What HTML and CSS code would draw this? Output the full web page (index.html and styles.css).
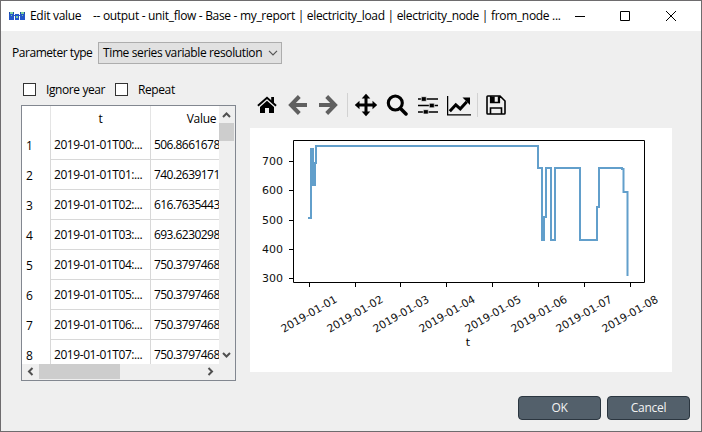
FILE: index.html
```html
<!DOCTYPE html>
<html lang="en">
<head>
<meta charset="utf-8">
<title>Edit value</title>
<link rel="stylesheet" href="styles.css">
</head>
<body>
<div class="window">
  <header class="titlebar">
    <svg class="app-icon" width="16" height="10" viewBox="0 0 16 10" shape-rendering="crispEdges">
      <path fill="#2456c8" d="M0 1h5v8H0zM6 3h4v6H6zM11 1h5v8h-5zM5 4h6v1H5z"/>
      <path fill="#1a49a8" d="M0 1h1v2H0zM4 1h1v2H4zM11 1h1v2h-1zM15 1h1v2h-1z"/>
      <path fill="#7fce9b" d="M1 1h3v2H1zM12 1h3v2h-3zM7 5h2v2H7zM2 4h1v1H2zM13 4h1v1h-1z"/>
    </svg>
    <span class="title-name">Edit value</span>
    <span class="title-path">-- output - unit_flow - Base - my_report | electricity_load | electricity_node | from_node ...</span>
    <svg class="controls" width="104" height="12" viewBox="0 0 104 12" fill="none" stroke="#000">
      <path d="M1 6.500h10M46.500 1.500h9v9h-9zM92 1l10 10M102 1l-10 10"/>
    </svg>
  </header>

  <div class="type-row">
    <span class="type-label">Parameter type</span>
    <div class="combo">
      <span>Time series variable resolution</span>
      <svg width="10" height="6" viewBox="0 0 10 6" fill="none" stroke="#555" stroke-width="1.200"><path d="M1 .8l4 4 4-4"/></svg>
    </div>
  </div>

  <main class="content">
    <section class="left">
      <div class="checks">
        <i class="box"></i><span class="ignore">Ignore year</span>
        <i class="box"></i><span class="repeat">Repeat</span>
      </div>
      <div class="table">
        <div class="grid">
          <div class="row head"><span class="num"></span><span class="time">t</span><span class="val">Value</span></div>
          <div class="row"><span class="num">1</span><span class="time">2019-01-01T00:...</span><span class="val">506.86616787</span></div>
          <div class="row"><span class="num">2</span><span class="time">2019-01-01T01:...</span><span class="val">740.26391718</span></div>
          <div class="row"><span class="num">3</span><span class="time">2019-01-01T02:...</span><span class="val">616.76354430</span></div>
          <div class="row"><span class="num">4</span><span class="time">2019-01-01T03:...</span><span class="val">693.62302980</span></div>
          <div class="row"><span class="num">5</span><span class="time">2019-01-01T04:...</span><span class="val">750.3797468...</span></div>
          <div class="row"><span class="num">6</span><span class="time">2019-01-01T05:...</span><span class="val">750.3797468...</span></div>
          <div class="row"><span class="num">7</span><span class="time">2019-01-01T06:...</span><span class="val">750.3797468...</span></div>
          <div class="row"><span class="num">8</span><span class="time">2019-01-01T07:...</span><span class="val">750.3797468...</span></div>
        </div>
        <div class="vscroll">
          <svg width="15" height="17" viewBox="0 0 15 17" class="arrow"><path d="M4 11l3.500-3.500L11 11"/></svg>
          <div class="vthumb"></div>
          <svg width="15" height="17" viewBox="0 0 15 17" class="arrow end"><path d="M4 6l3.500 3.500L11 6"/></svg>
        </div>
        <div class="hscroll">
          <svg width="17" height="15" viewBox="0 0 17 15" class="arrow"><path d="M10.500 4L7 7.500l3.500 3.500"/></svg>
          <div class="hthumb"></div>
          <svg width="17" height="15" viewBox="0 0 17 15" class="arrow right"><path d="M6.500 4l3.500 3.500L6.500 11"/></svg>
        </div>
      </div>
    </section>

    <section class="plot">
      <div class="toolbar">
        <svg class="home" width="20" height="18" viewBox="0 0 20 18">
          <path d="M3 11l7-6.300 7 6.300v6h-5v-5H8v5H3z"/>
          <path d="M.9 9.700L10 1.700l9.100 8" fill="none" stroke="#efefef" stroke-width="3.400"/>
          <path d="M.9 9.700L10 1.700l9.100 8" fill="none" stroke="#000" stroke-width="1.900"/>
          <path d="M14.200 1H17v6.500l-2.800-2.500z"/>
        </svg>
        <svg class="back" width="20" height="20" viewBox="0 0 20 20" fill="none" stroke="#606060" stroke-width="4"><path d="M19 10H4M11.300 1.500L3 10l8.300 8.500"/></svg>
        <svg class="forward" width="20" height="20" viewBox="0 0 20 20" fill="none" stroke="#606060" stroke-width="4"><path d="M1 10h15M8.700 1.500L17 10l-8.300 8.500"/></svg>
        <i class="sep"></i>
        <svg class="move" width="24" height="24" viewBox="0 0 24 24"><path d="M12 .8l4.300 4.700h-2.800v5h5V7.700l4.700 4.300-4.700 4.300v-2.800h-5v5h2.800L12 23.200l-4.300-4.700h2.800v-5h-5v2.800L.8 12l4.700-4.300v2.800h5v-5H7.700z"/></svg>
        <svg class="search" width="22" height="22" viewBox="0 0 22 22" fill="none" stroke="#000"><circle cx="9.300" cy="9" r="7" stroke-width="3.100"/><path d="M14.500 14.500l5.500 5.500" stroke-width="3.500" stroke-linecap="round"/></svg>
        <svg class="sliders" width="20" height="18" viewBox="0 0 20 18"><path d="M0 2.200h20v1.600H0zM0 8.700h20v1.600H0zM0 15.200h20v1.600H0z"/><path stroke="#efefef" stroke-width=".7" d="M3.300.700h5v4.600h-5zM11.300 7.200h5v4.600h-5zM5.300 13.700h5v4.300h-5z"/></svg>
        <svg class="axes" width="24" height="21" viewBox="0 0 24 21"><path d="M.6 1v18.900H24" fill="none" stroke="#000" stroke-width="1.300"/><path d="M2.800 16.300l6-6.500 4.500 4 6.500-7" fill="none" stroke="#000" stroke-width="3"/><path d="M15.500 2.500H23V10z"/></svg>
        <i class="sep"></i>
        <svg class="save" width="20" height="20" viewBox="0 0 20 20" fill="none" stroke="#000" stroke-width="1.600"><path d="M1.800 1h12.200l5 5v12.200q0 .8-.8.8H1.800q-.8 0-.8-.8V1.800Q1 1 1.800 1zM4.500 19v-6h11v6M4.700 1v6.500h8.600V1"/><path d="M5 1.500h3.700v6H5zM11.800 1.500h1.500v6h-1.500z" fill="#000" stroke="none"/></svg>
      </div>
      <svg class="chart" width="422" height="244" viewBox="250 128 422 244">
        <path class="axis" d="M293.500 140.500h351v142h-351z"/>
        <path class="axis" d="M289 161.500h4M289 190.500h4M289 220.500h4M289 249.500h4M289 278.500h4"/>
        <path class="axis" d="M309.500 283v4M355.500 283v4M400.500 283v4M446.500 283v4M492.500 283v4M538.500 283v4M584.500 283v4M630.500 283v4"/>
        <path class="series" d="M308 218h3v-69h2v36h2v-22h1v-17h222v22h4v72h2v-23h2v-49h5v72h4v-72h25v72h17v-33h2v-39h23v1h1.500v23h4v84"/>
        <g class="ylabels">
          <text x="283" y="165">700</text><text x="283" y="194">600</text><text x="283" y="224">500</text><text x="283" y="253">400</text><text x="283" y="282">300</text>
        </g>
        <g class="xlabels">
          <text transform="translate(338 301.500) rotate(-30)">2019-01-01</text>
          <text transform="translate(384 301.500) rotate(-30)">2019-01-02</text>
          <text transform="translate(430 301.500) rotate(-30)">2019-01-03</text>
          <text transform="translate(476 301.500) rotate(-30)">2019-01-04</text>
          <text transform="translate(522 301.500) rotate(-30)">2019-01-05</text>
          <text transform="translate(568 301.500) rotate(-30)">2019-01-06</text>
          <text transform="translate(613 301.500) rotate(-30)">2019-01-07</text>
          <text transform="translate(659 301.500) rotate(-30)">2019-01-08</text>
        </g>
        <text class="xtitle" x="468" y="346">t</text>
      </svg>
    </section>
  </main>

  <footer class="buttons"><button>OK</button><button>Cancel</button></footer>
</div>
</body>
</html>
```
FILE: styles.css
```css
* { box-sizing: border-box; }
body { margin: 0; }
.window {
  width: 702px; height: 432px; border: 1px solid #6e6c6e; background: #efefef;
  display: flex; flex-direction: column; overflow: hidden;
  font: 12px/16px "Open Sans", "Noto Sans", sans-serif; letter-spacing: -0.3px; color: #000;
  white-space: nowrap;
}
svg { display: block; flex: none; }
.titlebar { height: 30px; flex: none; background: #fff; display: flex; align-items: center; padding-left: 8px; }
.app-icon { margin-right: 5px; }
.title-name { width: 63px; }
.title-path { width: 469px; letter-spacing: -0.315px; }
.controls { margin-left: 12px; }
.type-row { display: flex; align-items: center; height: 22px; margin: 11px 0 0 11px; flex: none; }
.type-label { width: 86px; letter-spacing: -0.45px; }
.combo {
  width: 184px; height: 22px; border: 1px solid #adadad; background: #e1e1e1;
  display: flex; align-items: center; justify-content: space-between; padding: 0 3px 0 4px;
  letter-spacing: -0.38px;
}
.content { display: flex; height: 308px; margin-top: 19px; flex: none; }
.left { width: 215px; margin-left: 20px; }
.checks { display: flex; align-items: center; height: 13px; padding-left: 2px; letter-spacing: -0.4px; }
.box { width: 13px; height: 13px; border: 1px solid #333; background: #fff; margin-right: 10px; }
.ignore { width: 69px; }
.table {
  margin-top: 9px; width: 215px; height: 276px; border: 1px solid #828790; background: #efefef;
  display: grid; grid-template-columns: 197px 16px; grid-template-rows: 258px 16px;
}
.grid { overflow: hidden; background: #fff; }
.row { display: flex; height: 30px; width: 240px; letter-spacing: -0.43px; }
.row > span { padding-top: 7px; flex: none; }
.row .num { width: 29px; padding: 8px 0 0 4px; border-right: 1px solid #d8d8d8; }
.row .time { width: 100px; padding-left: 3px; border-right: 1px solid #d8d8d8; border-bottom: 1px solid #d8d8d8; }
.row .val { width: 111px; padding-left: 3px; border-bottom: 1px solid #d8d8d8; letter-spacing: -0.55px; }
.row.head { height: 24px; }
.row.head > span { border-bottom: 0; padding: 5px 0 0; text-align: center; border-right-color: #e5e5e5; letter-spacing: -0.3px; }
.row.head .val { padding-right: 10px; }
.arrow { fill: none; stroke: #505050; stroke-width: 2; }
.vscroll { display: flex; flex-direction: column; }
.vthumb { width: 15px; height: 18px; background: #cdcdcd; }
.arrow.end { margin-top: auto; }
.hscroll { display: flex; }
.hthumb { width: 81px; height: 15px; background: #cdcdcd; }
.arrow.right { margin-left: 82px; }
.plot { margin-left: 14px; width: 422px; }
.toolbar { display: flex; align-items: center; height: 24px; margin-top: 10px; padding-left: 7px; }
.sep { width: 1px; height: 24px; background: #d2d2d2; }
.back { margin-left: 11px; }
.forward { margin: 0 9px 0 10px; }
.move { margin: 0 8px 0 6px; }
.sliders { margin: 0 9px 0 10px; }
.axes { margin-right: 6px; }
.save { margin-left: 8px; }
.chart { margin-top: 11px; background: #fff; font: 11px "DejaVu Sans", sans-serif; letter-spacing: 0; }
.axis { fill: none; stroke: #000; stroke-width: 1; }
.series { fill: none; stroke: #629fcb; stroke-width: 2; }
.ylabels, .xlabels { text-anchor: end; fill: #111; }
.xlabels { font-size: 10.8px; }
.xtitle { text-anchor: middle; }
.buttons { display: flex; gap: 6px; margin: 5px 0 0 517px; }
.buttons button {
  width: 83px; height: 24px; padding: 0; border: 1px solid #2b3640; border-radius: 4px;
  background: #53606b; color: #f2f2f2; font: inherit; letter-spacing: inherit;
}
```
